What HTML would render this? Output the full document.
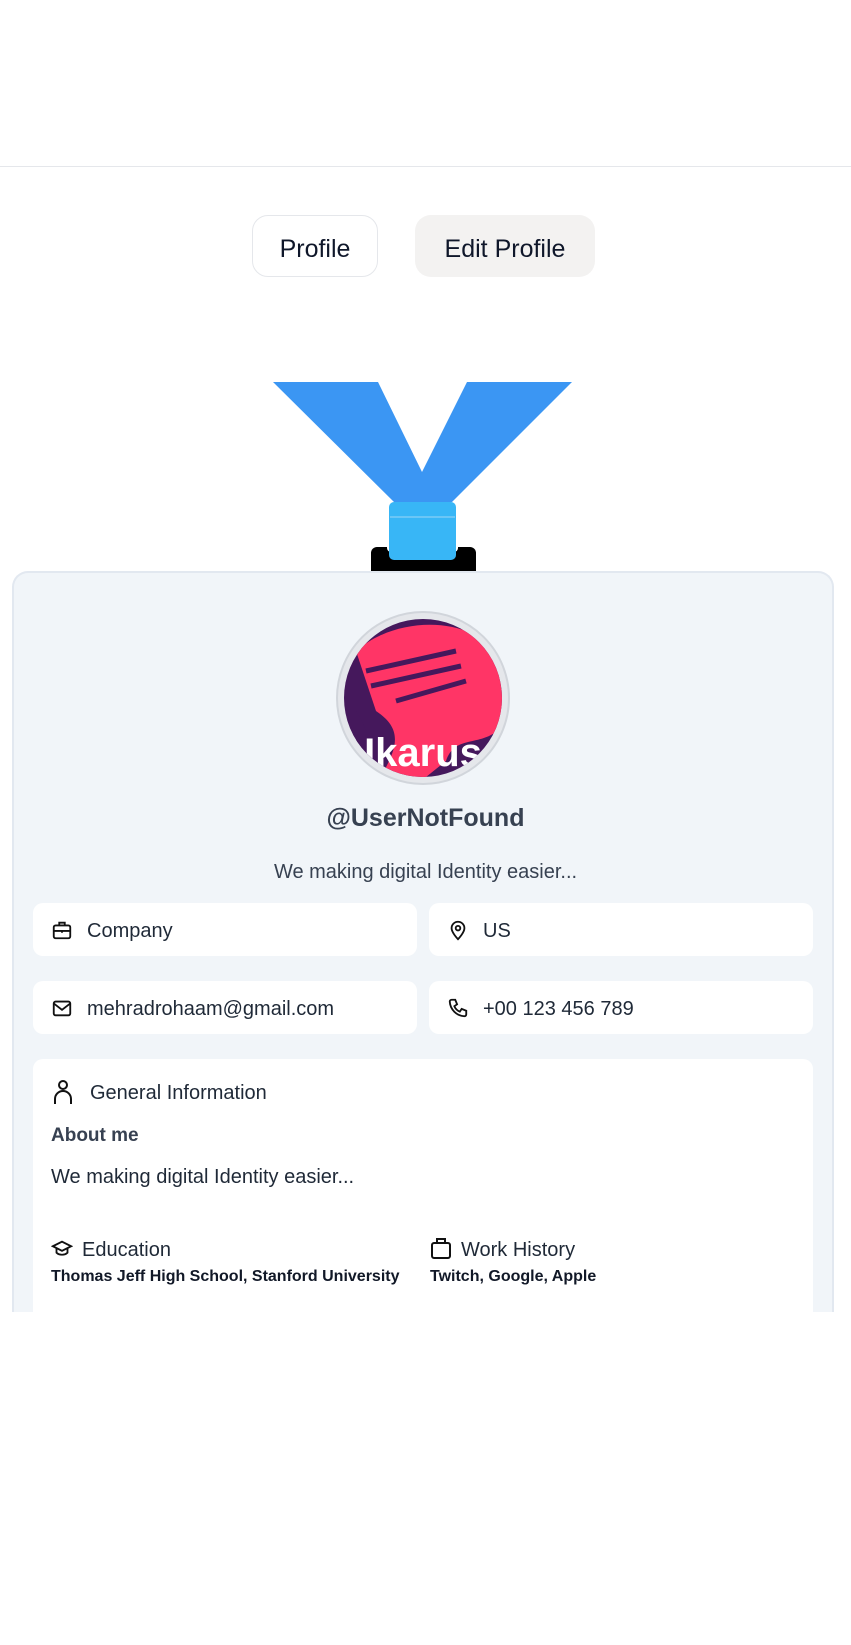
<!DOCTYPE html>
<html><head><meta charset="utf-8"><style>
*{box-sizing:border-box;margin:0;padding:0}
body{width:851px;height:1645px;background:#fff;font-family:"Liberation Sans",sans-serif;position:relative;overflow:hidden;color:#111827}
.abs{position:absolute}
.hr{left:0;top:166px;width:851px;height:1px;background:#e5e7eb}
.btn{top:215px;height:62px;border-radius:16px;font-size:25px;display:flex;align-items:center;justify-content:center;color:#0f172a;padding-top:6px}
.card{left:12px;top:571px;width:822px;height:760px;background:#f1f5f9;border:2px solid #e2e8f0;border-radius:16px;border-bottom:none}
.box{background:#fff;border-radius:10px;height:53px;display:flex;align-items:center;font-size:20px;color:#1f2937;padding-left:18px;padding-top:4px}
.box svg{margin-right:14px;margin-top:-4px}
</style></head><body>
<div class="abs hr"></div>
<div class="abs btn" style="left:252px;width:126px;border:1px solid #e5e7eb">Profile</div>
<div class="abs btn" style="left:415px;width:180px;background:#f3f2f1">Edit Profile</div>
<svg class="abs" style="left:0;top:0" width="851" height="600">
<polygon points="273,382 378,382 422,472 467,382 572,382 452,502 394,502" fill="#3b96f3"/>
<rect x="371" y="547" width="105" height="30" rx="6" fill="#000"/>
<rect x="387" y="540" width="71" height="12" rx="4" fill="#fff"/>
<rect x="389" y="502" width="67" height="58" rx="5" fill="#38b6f6"/>
<line x1="390" y1="517" x2="455" y2="517" stroke="#9bd6f7" stroke-width="1"/>
</svg>
<div class="abs card"></div>
<svg class="abs" style="left:336px;top:611px" width="174" height="174">
<circle cx="87" cy="87" r="86" fill="#e5e7eb" stroke="#d1d5db" stroke-width="2"/>
<clipPath id="c"><circle cx="87" cy="87" r="79"/></clipPath>
<g clip-path="url(#c)">
<rect width="174" height="174" fill="#45185c"/>
<path d="M20,40 C60,5 130,5 160,40 L170,110 C150,140 120,120 110,150 L80,174 L40,174 C60,140 70,120 40,100 Z" fill="#ff3566"/>
<path d="M30,60 L120,40 M35,75 L125,55 M60,90 L130,70" stroke="#45185c" stroke-width="5"/>
<path d="M20,100 C40,130 30,150 50,174 L20,174Z" fill="#45185c"/>
<text x="87" y="155" text-anchor="middle" font-size="40" font-weight="bold" fill="#fff" font-family="Liberation Sans,sans-serif">Ikarus</text>
</g></svg>
<div class="abs" style="left:0;width:851px;top:804px;text-align:center;font-size:25px;font-weight:bold;color:#374151">@UserNotFound</div>
<div class="abs" style="left:0;width:851px;top:861px;text-align:center;font-size:20px;color:#374151">We making digital Identity easier...</div>
<div class="abs box" style="left:33px;top:903px;width:384px"><svg width="22" height="22" viewBox="0 0 24 24" fill="none" stroke="#111" stroke-width="2"><rect x="3" y="7" width="18" height="14" rx="2"/><path d="M9 7V4h6v3M3 13h18M12 12v3"/></svg>Company</div>
<div class="abs box" style="left:429px;top:903px;width:384px"><svg width="22" height="22" viewBox="0 0 24 24" fill="none" stroke="#111" stroke-width="2"><path d="M12 22s7-7 7-12a7 7 0 0 0-14 0c0 5 7 12 7 12z"/><circle cx="12" cy="10" r="2.5"/></svg>US</div>
<div class="abs box" style="left:33px;top:981px;width:384px"><svg width="22" height="22" viewBox="0 0 24 24" fill="none" stroke="#111" stroke-width="2"><rect x="3" y="5" width="18" height="15" rx="2"/><path d="M3 7l9 7 9-7"/></svg>mehradrohaam@gmail.com</div>
<div class="abs box" style="left:429px;top:981px;width:384px"><svg width="22" height="22" viewBox="0 0 24 24" fill="none" stroke="#111" stroke-width="2"><path d="M5 3h4l2 5-3 2a11 11 0 0 0 6 6l2-3 5 2v4a2 2 0 0 1-2 2A17 17 0 0 1 3 5a2 2 0 0 1 2-2z"/></svg>+00 123 456 789</div>
<div class="abs" style="left:33px;top:1059px;width:780px;height:260px;background:#fff;border-radius:10px 10px 0 0"></div>
<svg class="abs" style="left:51px;top:1079px" width="24" height="26" viewBox="0 0 24 26" fill="none" stroke="#111" stroke-width="2"><circle cx="12" cy="6" r="4"/><path d="M4 25v-5a8 8 0 0 1 16 0v5"/></svg>
<div class="abs" style="left:90px;top:1082px;font-size:20px;color:#1f2937">General Information</div>
<div class="abs" style="left:51px;top:1125px;font-size:19px;font-weight:bold;color:#374151">About me</div>
<div class="abs" style="left:51px;top:1166px;font-size:20px;color:#1f2937">We making digital Identity easier...</div>
<svg class="abs" style="left:51px;top:1238px" width="22" height="22" viewBox="0 0 24 24" fill="none" stroke="#111" stroke-width="2"><path d="M2 9l10-5 10 5-10 5z"/><path d="M6 11v5c3 3 9 3 12 0v-5"/></svg>
<div class="abs" style="left:82px;top:1239px;font-size:20px;color:#1f2937">Education</div>
<div class="abs" style="left:51px;top:1268px;font-size:16px;font-weight:bold;color:#111827">Thomas Jeff High School, Stanford University</div>
<svg class="abs" style="left:430px;top:1236px" width="22" height="24" viewBox="0 0 22 24" fill="none" stroke="#111" stroke-width="2"><rect x="2" y="7" width="18" height="15" rx="2"/><path d="M7 7V3h8v4"/></svg>
<div class="abs" style="left:461px;top:1239px;font-size:20px;color:#1f2937">Work History</div>
<div class="abs" style="left:430px;top:1268px;font-size:16px;font-weight:bold;color:#111827">Twitch, Google, Apple</div>
<div class="abs" style="left:0;top:1312px;width:851px;height:333px;background:#fff"></div>
</body></html>
